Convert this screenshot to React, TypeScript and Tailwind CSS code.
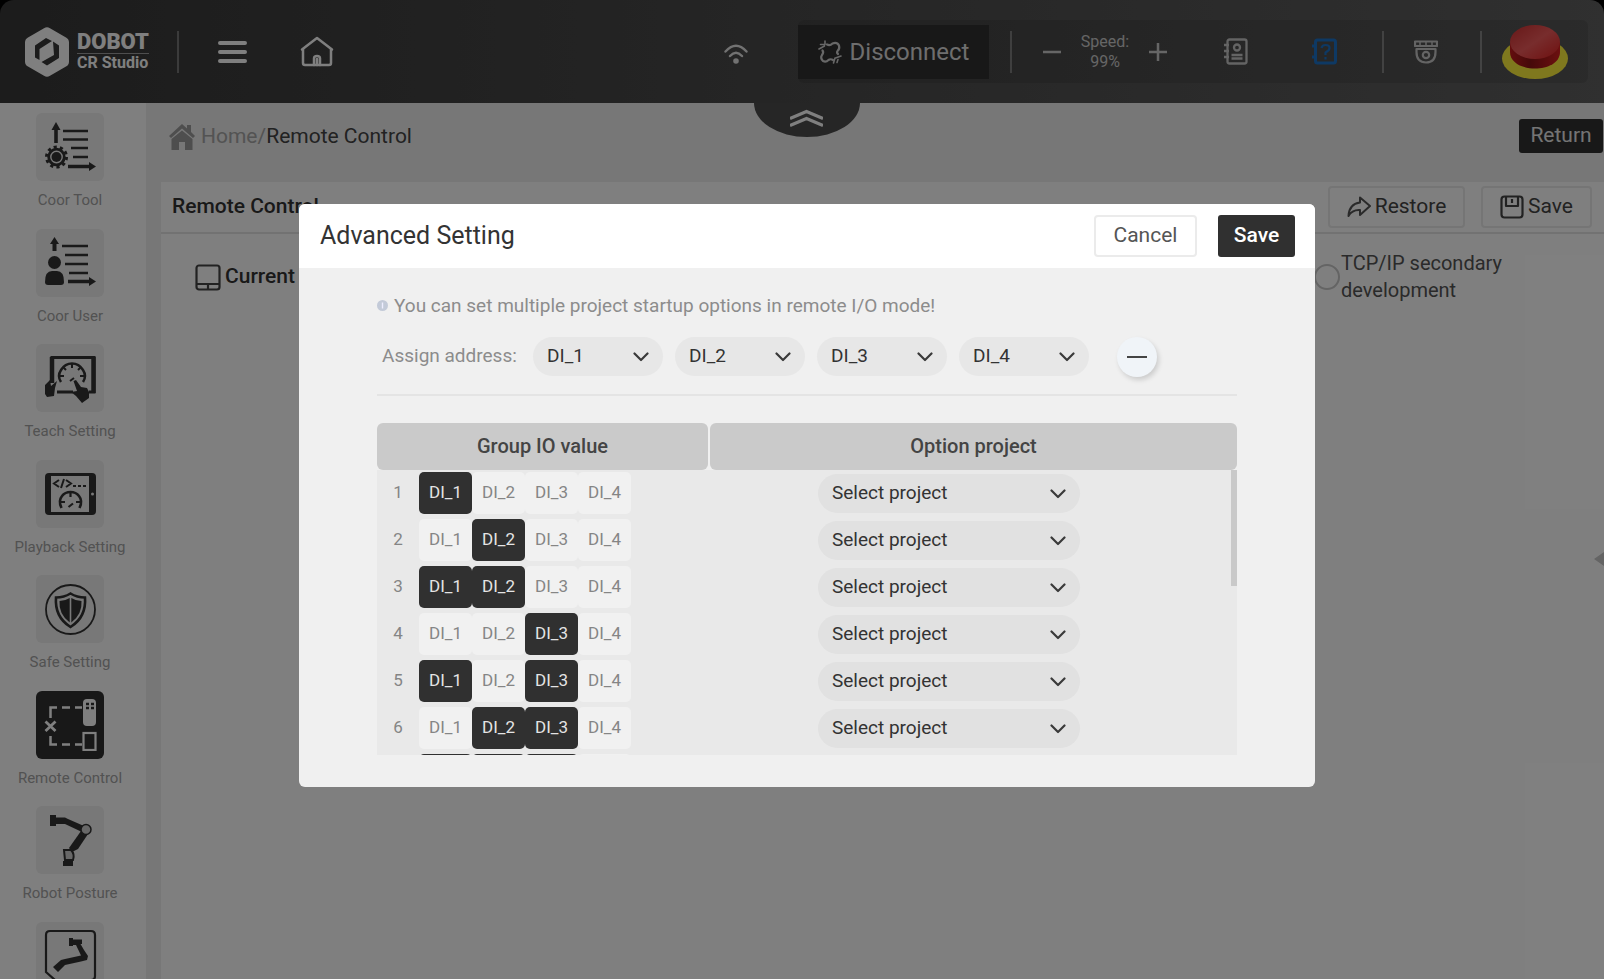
import { useState, type ReactNode } from "react";

const ADDRESSES = ["DI_1", "DI_2", "DI_3", "DI_4"];
const ROWS = Array.from({ length: 15 }, (_, i) => i + 1);

function Chevron({ className }: { className: string }) {
  return (
    <svg viewBox="0 0 16 10" className={className} fill="none" stroke="#3a3a3a" strokeWidth="2.2" strokeLinecap="round" strokeLinejoin="round" aria-hidden="true">
      <path d="M1.5 1.5 L8 8 L14.5 1.5" />
    </svg>
  );
}

function Logo() {
  return (
    <div className="flex items-center gap-2 text-white">
      <svg viewBox="0 0 44 50" className="h-[50px] w-11" aria-hidden="true">
        <path fill="#fff" d="M19 1.2 Q22 -.6 25 1.2 L41 10.4 Q44 12 44 15.500 V34.500 Q44 38 41 39.600 L25 48.800 Q22 50.600 19 48.800 L3 39.600 Q0 38 0 34.500 V15.500 Q0 12 3 10.400 Z" />
        <path fill="#383838" d="M21 11 L27 14 L14.500 22 V33 L10 30.500 V18.500 Z" />
        <path fill="#383838" d="M28 14.500 L34 18.500 V31 L22 38.500 L16.500 35 L29 28 Z" />
      </svg>
      <div className="flex flex-col">
        <span className="border-b border-white/50 text-[22px] leading-[22px] font-black">DOBOT</span>
        <span className="text-[16px] leading-[18px] font-bold">CR Studio</span>
      </div>
    </div>
  );
}

function IconButton({ label, children, className }: { label: string; children: ReactNode; className: string }) {
  return (
    <button type="button" aria-label={label} className={`flex shrink-0 items-center justify-center ${className}`}>
      {children}
    </button>
  );
}

function Rule() {
  return <span className="h-[42px] w-0.5 shrink-0 bg-white/30" />;
}

function EStop() {
  return (
    <svg viewBox="0 0 66 54" className="h-[54px] w-[66px]" aria-hidden="true">
      <defs>
        <linearGradient id="estop-top" x1="0" y1="0" x2="1" y2="1">
          <stop offset="0" stopColor="#d03030" />
          <stop offset="0.5" stopColor="#f05a5a" />
          <stop offset="1" stopColor="#e02020" />
        </linearGradient>
        <linearGradient id="estop-side" x1="0" y1="0" x2="1" y2="0">
          <stop offset="0" stopColor="#c81c1c" />
          <stop offset="0.4" stopColor="#8c1414" />
          <stop offset="1" stopColor="#d82020" />
        </linearGradient>
      </defs>
      <ellipse cx="33" cy="33.500" rx="33" ry="20.500" fill="#fff03c" />
      <path d="M8 18 V27 C8 49 58 49 58 27 V18 Z" fill="url(#estop-side)" />
      <ellipse cx="33" cy="17" rx="25" ry="17" fill="url(#estop-top)" />
    </svg>
  );
}

function Header() {
  return (
    <header className="relative flex h-[103px] shrink-0 items-center rounded-t-[14px] bg-linear-to-r from-[#383838] to-[#606060] pr-4 pl-[25px] text-white">
      <Logo />
      <div className="ml-7 flex items-center">
        <Rule />
        <IconButton label="Menu" className="ml-[30px] h-12 w-12">
          <svg viewBox="0 0 29 24" className="h-6 w-[29px]" stroke="#fff" strokeWidth="4" strokeLinecap="round" aria-hidden="true">
            <path d="M2 3 H27 M2 12 H27 M2 21 H27" />
          </svg>
        </IconButton>
        <IconButton label="Home" className="ml-9 h-12 w-12">
          <svg viewBox="0 0 34 31" className="h-[31px] w-[34px]" fill="none" stroke="#fff" strokeWidth="2.500" strokeLinejoin="round" strokeLinecap="round" aria-hidden="true">
            <path d="M2 13.500 L17 2 L32 13.500" />
            <path d="M3 13.500 V27 Q3 29 5 29 H29 Q31 29 31 27 V13.500" />
            <path d="M14 29 V22.500 Q14 20 17 20 Q20 20 20 22.500 V29 M17 23 V29" />
          </svg>
        </IconButton>
      </div>
      <IconButton label="Network" className="ml-auto h-12 w-12">
        <svg viewBox="0 0 24 20" className="mt-1 h-5 w-6" fill="none" stroke="#e4e4e4" strokeWidth="2.400" strokeLinecap="round" aria-hidden="true">
          <path d="M1.500 7.500 Q12 -4 22.500 7.500 M6 12 Q12 5.500 18 12" />
          <circle cx="12" cy="17" r="1.600" fill="#e4e4e4" />
        </svg>
      </IconButton>
      <div className="ml-[38px] flex h-[63px] items-center rounded-md bg-black/10 pr-5">
        <button type="button" className="flex h-[54px] w-[191px] items-center justify-center gap-2 bg-[#303030] text-[24px] text-[#dcdcdc]">
          <svg viewBox="0 0 24 24" className="h-6 w-6" fill="none" stroke="#d0d0d0" strokeWidth="2.200" strokeLinecap="round" strokeLinejoin="round" aria-hidden="true">
            <path d="M9 4.500 Q12 6 14.500 3.500 Q19 1.500 21 5.500 Q22 9 19.500 11 Q18.500 13 20 14" />
            <path d="M4.500 10.500 Q6 12.500 4 15 Q2 18 5 21 Q8 22.500 10.500 20 Q12.500 18.500 15 20" />
            <path d="M2.500 4.500 H7 M7 1 V4.500 M1 9 L6.500 6 M17.500 18 L23 16 M17 18 L15.500 23 M20 19.500 L19 22.500" strokeWidth="1.600" />
          </svg>
          Disconnect
        </button>
        <span className="w-[21px]" />
        <Rule />
        <IconButton label="Decrease speed" className="ml-5 h-10 w-10">
          <svg viewBox="0 0 18 18" className="h-[18px] w-[18px]" stroke="#ccc" strokeWidth="2.500" aria-hidden="true"><path d="M0 9 H18" /></svg>
        </IconButton>
        <div className="w-[66px] text-center text-[16px] leading-5 text-[#ccc]">
          Speed:
          <br />
          99%
        </div>
        <IconButton label="Increase speed" className="h-10 w-10">
          <svg viewBox="0 0 18 18" className="h-[18px] w-[18px]" stroke="#ccc" strokeWidth="2.500" aria-hidden="true"><path d="M0 9 H18 M9 0 V18" /></svg>
        </IconButton>
        <IconButton label="Logs" className="ml-[38px] h-10 w-10">
          <svg viewBox="0 0 24 27" className="h-[27px] w-6" fill="none" stroke="#c8c8c8" strokeWidth="2.300" strokeLinejoin="round" aria-hidden="true">
            <rect x="3.500" y="1.500" width="19" height="24" rx="2" />
            <path d="M0 7 H5 M0 13 H5 M0 19 H5" />
            <circle cx="13" cy="9.500" r="3" />
            <path d="M7.500 17 H18.500 M7.500 20.500 H18.500" />
          </svg>
        </IconButton>
        <IconButton label="Help" className="ml-[49px] h-10 w-10">
          <svg viewBox="0 0 26 27" className="h-[27px] w-[26px]" fill="none" stroke="#1c72c8" strokeWidth="3" strokeLinejoin="round" aria-hidden="true">
            <rect x="3.500" y="2" width="20" height="23" rx="2" />
            <path d="M0 8 H4 M0 19 H4" />
            <path d="M9.500 10 Q10 7 13.500 7 Q17.500 7 17.500 10 Q17.500 12.500 13.500 14.500 V17 M13.500 19 V21.500" strokeWidth="2.200" />
          </svg>
        </IconButton>
        <span className="w-[37px]" />
        <Rule />
        <IconButton label="Camera" className="ml-[22px] h-10 w-10">
          <svg viewBox="0 0 24 24" className="h-6 w-6" fill="none" stroke="#c8c8c8" strokeWidth="2.200" strokeLinejoin="round" aria-hidden="true">
            <path d="M1 1.500 H23 V6 H1 Z" />
            <path d="M6 1.500 V6 M12 1.500 V6 M18 1.500 V6" strokeWidth="1.500" />
            <path d="M2.500 9 H21.500 V12 Q21.500 22.500 12 22.500 Q2.500 22.500 2.500 12 Z" />
            <circle cx="12" cy="15" r="3.200" />
          </svg>
        </IconButton>
        <span className="w-[34px]" />
        <Rule />
        <IconButton label="Emergency stop" className="ml-5 h-[54px] w-[66px]">
          <EStop />
        </IconButton>
      </div>
      <button
        type="button"
        aria-label="Collapse toolbar"
        className="absolute top-full left-[47%] flex h-[34px] w-[106px] justify-center rounded-[0_0_50%_50%/0_0_100%_100%] bg-[#4c4c4c] pt-[6px]"
      >
        <svg viewBox="0 0 33 19" className="h-[19px] w-[33px]" fill="none" stroke="#fff" strokeWidth="3.200" aria-hidden="true">
          <path d="M0 9.500 L16.500 2.500 L33 9.500 M0 16.500 L16.500 9.500 L33 16.500" />
        </svg>
      </button>
    </header>
  );
}

const INK = "#333333";

function ArrowUp() {
  return <path d="M11 0 L15.500 8 H12.800 V21 H9.200 V8 H6.500 Z" fill={INK} />;
}

function ArrowRight() {
  return <path d="M23 42.800 H44 V40 L51 44.500 L44 49 V46.200 H23 Z" fill={INK} />;
}

const ICONS: Record<string, ReactNode> = {
  "Coor Tool": (
    <>
      <ArrowUp />
      <path d="M18 9 H43 M18 17.500 H43 M26 26 H43 M28 35 H43" stroke={INK} strokeWidth="2.300" />
      <circle cx="11.500" cy="35" r="10" fill="none" stroke={INK} strokeWidth="3" strokeDasharray="3.140 3.140" />
      <circle cx="11.500" cy="35" r="7.800" fill="none" stroke={INK} strokeWidth="2.800" />
      <circle cx="11.500" cy="35" r="5" fill={INK} />
      <ArrowRight />
    </>
  ),
  "Coor User": (
    <>
      <path d="M9.500 0 L14 7 H11.500 V14 H7.500 V7 H5 Z" fill={INK} />
      <path d="M17 9 H43 M20 18 H43 M20 27 H43 M24 36 H43" stroke={INK} strokeWidth="2.300" />
      <circle cx="9.500" cy="25.500" r="6.500" fill={INK} />
      <path d="M0 45 Q0 34 7 34 H12 Q19 34 19 45 Q19 48 16 48 H3 Q0 48 0 45 Z" fill={INK} />
      <ArrowRight />
    </>
  ),
  "Teach Setting": (
    <>
      <path d="M7 30 V4.500 H49 V39 H44 M12 39 H28" fill="none" stroke={INK} strokeWidth="3" />
      <path d="M48.500 4 V40 M7 4 V30" stroke={INK} strokeWidth="4.500" />
      <path d="M16 29 Q12 23 16 17 Q20 10.500 27 10.500 Q34 10.500 38 17 Q42 23 38 29" fill="none" stroke={INK} strokeWidth="2.500" />
      <path d="M27 11 V15 M15 23 H19 M39 23 H35 M18 14 L21 17 M36 14 L33 17 M25 28 L29 25" stroke={INK} strokeWidth="2" />
      <path d="M0 32 L5 27 L6 33 L12 28 L10 35 L9 43 L2 44 L0 41 Z" fill={INK} />
      <path d="M28.500 28 L31 27 L36 34 L42 35 L44 39 L44 45 L37 50 L31 43 L26 39 L32 38 Z" fill={INK} />
    </>
  ),
  "Playback Setting": (
    <>
      <rect x="0" y="5" width="51" height="42" rx="4" fill={INK} />
      <rect x="6" y="8" width="38" height="36" fill="#f0f0f0" />
      <path d="M14 12 L9 15.500 L14 19 M19 11 L16 20 M21 12 L26 15.500 L21 19 M28 18 H31 M33 18 H36 M38 18 H41" fill="none" stroke={INK} strokeWidth="2" />
      <path d="M16.500 40 Q13 33 17 28 Q20 24 25.500 24 Q31 24 34 28 Q38 33 34.500 40" fill="none" stroke={INK} strokeWidth="2.600" />
      <path d="M25.500 24 V29 M20 34 H16 M35 34 H31 M23.500 39 L28 35.500" fill="none" stroke={INK} strokeWidth="2.200" />
      <circle cx="47.500" cy="26" r="1.500" fill="#f0f0f0" />
    </>
  ),
  "Safe Setting": (
    <>
      <circle cx="25.500" cy="25.500" r="24.500" fill="none" stroke={INK} strokeWidth="1.800" />
      <path d="M25.500 9.500 Q32 13.500 40 13.500 Q41.500 33 25.500 43 Q9.500 33 11 13.500 Q19 13.500 25.500 9.500 Z" fill="none" stroke={INK} strokeWidth="2.600" />
      <path d="M24.700 14 V38.500 Q13.500 30 14.500 17 Q20 17 24.700 14 Z M26.300 14 V38.500 Q37.500 30 36.500 17 Q31 17 26.300 14 Z" fill={INK} />
    </>
  ),
  "Remote Control": (
    <>
      <path d="M5.500 19 V8.500 H12 M17 8.500 H25 M30 8.500 H37 M5.500 37 V45.500 H12 M17 45.500 H25 M30 45.500 H37" fill="none" stroke="#fff" strokeWidth="2.500" />
      <path d="M0.500 22.500 L10.500 32 M10.500 22.500 L0.500 32" stroke="#fff" strokeWidth="2.800" />
      <rect x="38" y="0" width="13" height="27" rx="4" fill="#fff" />
      <path d="M41 5 H44 M46 5 H49 M41 9 H44 M46 9 H49" stroke="#303030" strokeWidth="2.500" />
      <rect x="38.500" y="34" width="12" height="17" fill="none" stroke="#fff" strokeWidth="2.200" />
    </>
  ),
  "Robot Posture": (
    <>
      <path d="M5 0 H11 V2.500 H20 L23 4 L39 11 L37 17 L20 9 H11 V11 H5 Z" fill={INK} />
      <path d="M43 19 L33 34 L27 37 L24 33 L36 16 Z" fill={INK} />
      <circle cx="41" cy="14.500" r="5" fill="#d0d0d0" stroke={INK} strokeWidth="1.500" />
      <path d="M19 35 H26 Q30 39 28 45 H20 Z" fill="#d0d0d0" stroke={INK} strokeWidth="2" />
      <path d="M18 46 H28 V51 H18 Z" fill={INK} />
    </>
  ),
  "Robot Pack": (
    <>
      <path d="M5 1 H46 Q50 1 50 5 V46 Q50 50 46 50 H10 L1 42 V5 Q1 1 5 1 Z" fill="none" stroke={INK} strokeWidth="2.200" />
      <path d="M24 8 H28 V9.500 H37 V14 H35.500 L39 20 L43 26 L42 30 L36 31.500 L20 35 L13 42 L8 37 L16 30 L20 29 L36 25.500 L31 15 H28 V16 H24 Z" fill={INK} />
    </>
  ),
};

function SidebarItem({ label, active }: { label: string; active: boolean }) {
  const tile = active ? "bg-[#303030]" : "bg-[#f0f0f0]";
  return (
    <li>
      <button type="button" aria-label={label} className="flex w-full flex-col items-center gap-2">
        <span className={`flex h-[68px] w-[68px] items-center justify-center rounded-md ${tile}`}>
          <svg viewBox="-1 -1 53 53" className="h-[53px] w-[53px]" aria-hidden="true">
            {ICONS[label]}
          </svg>
        </span>
        <span className="text-[15px] leading-normal whitespace-nowrap text-[#a4a4a4]">{label === "Robot Pack" ? "" : label}</span>
      </button>
    </li>
  );
}

function Sidebar() {
  return (
    <nav className="w-[146px] shrink-0 overflow-hidden bg-white pr-[6px]">
      <ul className="flex flex-col gap-[17px] pt-[10px]">
        {Object.keys(ICONS).map((label) => (
          <SidebarItem key={label} label={label} active={label === "Remote Control"} />
        ))}
      </ul>
    </nav>
  );
}

function Workspace() {
  return (
    <main className="flex min-w-0 flex-1 flex-col bg-[#eeeeee] pl-[15px]">
      <div className="flex h-[79px] items-start justify-between pt-4 pl-2">
        <div className="flex h-9 items-center text-[21px]">
          <svg viewBox="0 0 26 26" className="mr-[6px] h-[26px] w-[26px]" fill="#9c9c9c" aria-hidden="true">
            <path d="M0 12 L13 0 L18 4.500 V1 H22 V8 L26 12 L24 14 L13 4.500 L2 14 Z" />
            <path d="M2.500 15 L13 6.500 L23.500 15 V26 H16 V18 H10 V26 H2.500 Z" />
          </svg>
          <a href="#home" className="text-[#a6a6a6]">Home/</a>
          <span className="text-[#444]">Remote Control</span>
        </div>
        <button type="button" className="mr-px h-[34px] w-[84px] rounded-[3px] bg-[#303030] text-[21px] text-[#e8e8e8]">Return</button>
      </div>
      <section className="relative flex-1 bg-white">
        <div className="flex h-[52px] items-center justify-between border-b-2 border-[#e4e4e4] pr-3 pl-[11px]">
          <h1 className="text-[21px] font-medium text-[#333]">Remote Control</h1>
          <div className="flex gap-4">
            <button type="button" className="flex h-[42px] w-[137px] items-center justify-center gap-1 rounded border-2 border-[#ebebeb] text-[21px] text-[#444]">
              <svg viewBox="0 0 24 22" className="h-[22px] w-6" fill="none" stroke="#555" strokeWidth="2" strokeLinejoin="round" aria-hidden="true">
                <path d="M13 1.500 L23 10 L13 19 V14 Q5 13.500 1.500 20 Q2 8 13 6.500 Z" />
              </svg>
              Restore
            </button>
            <button type="button" className="flex h-[42px] w-[111px] items-center justify-center gap-1 rounded border-2 border-[#ebebeb] text-[21px] text-[#444]">
              <svg viewBox="0 0 24 24" className="h-6 w-6" fill="none" stroke="#444" strokeWidth="2.200" strokeLinejoin="round" aria-hidden="true">
                <rect x="1.500" y="1.500" width="21" height="21" rx="3" />
                <path d="M6 2 V11 H18 V2 M12 4 V8" />
              </svg>
              Save
            </button>
          </div>
        </div>
        <div className="flex justify-between pt-4 pl-[34px]">
          <div className="flex h-[54px] items-center gap-1 text-[21px] font-medium text-[#333]">
            <svg viewBox="0 0 26 27" className="h-[27px] w-[26px]" fill="none" stroke="#444" strokeWidth="2.200" aria-hidden="true">
              <rect x="1.500" y="1.500" width="23" height="24" rx="2.500" />
              <path d="M2 20 H24 M13 20 V25" />
            </svg>
            Current mode
          </div>
          <label className="flex w-[290px] items-center gap-px text-[20px] leading-[27px] text-[#555]">
            <input type="radio" name="mode" className="h-[26px] w-[26px] shrink-0 appearance-none rounded-full border-2 border-[#c8c8c8]" />
            <span className="w-[200px]">TCP/IP secondary development</span>
          </label>
        </div>
        <svg viewBox="0 0 10 14" className="absolute top-[370px] right-0 h-[14px] w-[10px]" fill="#c8c8c8" aria-hidden="true">
          <path d="M0 7 L10 0 V14 Z" />
        </svg>
      </section>
    </main>
  );
}

function AddressSelect({ value, index, onChange }: { value: string; index: number; onChange: (v: string) => void }) {
  return (
    <div className="relative">
      <select
        aria-label={`Address ${index + 1}`}
        value={value}
        onChange={(e) => onChange(e.target.value)}
        className="block h-[39px] w-[130px] appearance-none rounded-full bg-[#e7e7e7] pl-[14px] text-[19px] text-[#333]"
      >
        {ADDRESSES.map((a) => (
          <option key={a}>{a}</option>
        ))}
      </select>
      <Chevron className="pointer-events-none absolute top-[15px] right-[14px] h-[10px] w-4" />
    </div>
  );
}

function ProjectRow({ n }: { n: number }) {
  return (
    <tr className="h-[47px] bg-[#e9e9e9]">
      <td className="p-0">
        <div className="flex items-center">
          <span className="w-[42px] text-center text-[17px] text-[#858585]">{n}</span>
          {ADDRESSES.map((a, bit) => {
            const on = Math.floor(n / 2 ** bit) % 2 === 1;
            return (
              <button
                key={a}
                type="button"
                aria-pressed={on}
                className={`h-[42px] w-[53px] rounded-[5px] text-[17px] ${on ? "bg-[#303030] text-[#e4e4e4]" : "bg-[#f1f1f1] text-[#858585]"}`}
              >
                {a}
              </button>
            );
          })}
        </div>
      </td>
      <td className="p-0">
        <div className="relative ml-[108px] w-[262px]">
          <select aria-label={`Project for group ${n}`} className="block h-[39px] w-full appearance-none rounded-full bg-[#e1e1e1] pl-[14px] text-[19px] text-[#333]">
            <option>Select project</option>
          </select>
          <Chevron className="pointer-events-none absolute top-[15px] right-[14px] h-[10px] w-4" />
        </div>
      </td>
    </tr>
  );
}

function AdvancedDialog() {
  const [addresses, setAddresses] = useState(ADDRESSES);
  return (
    <div role="dialog" aria-modal="true" aria-labelledby="dialog-title" className="w-[1016px] max-w-full overflow-hidden rounded-md bg-[#f0f0f0]">
      <div className="flex h-16 items-center bg-white pr-5 pl-[21px]">
        <h2 id="dialog-title" className="flex-1 text-[25px] text-[#333]">Advanced Setting</h2>
        <button type="button" className="h-[42px] w-[103px] rounded border-2 border-[#ebebeb] text-[21px] text-[#555]">Cancel</button>
        <button type="button" className="ml-[21px] h-[42px] w-[77px] rounded-[3px] bg-[#303030] text-[21px] font-medium text-white">Save</button>
      </div>
      <div className="px-[78px] pt-6 pb-8">
        <p className="flex items-center gap-[6px] text-[19px] leading-7 text-[#8c8c8c]">
          <svg viewBox="0 0 11 11" className="h-[11px] w-[11px]" aria-hidden="true">
            <circle cx="5.500" cy="5.500" r="5.500" fill="#c3cad8" />
            <path d="M5.500 2.500 V8.500" stroke="#eef" strokeWidth="1.400" />
          </svg>
          You can set multiple project startup options in remote I/O mode!
        </p>
        <div className="mt-[17px] flex items-center gap-3 pl-[5px]">
          <span className="w-[139px] text-[19px] text-[#8c8c8c]">Assign address:</span>
          {addresses.map((a, i) => (
            <AddressSelect key={i} value={a} index={i} onChange={(v) => setAddresses(addresses.map((x, j) => (j === i ? v : x)))} />
          ))}
          <button type="button" aria-label="Remove address" className="ml-4 flex h-10 w-10 items-center justify-center rounded-full bg-[#f0f4f8] shadow-[2px_3px_5px_rgba(0,0,0,0.15)]">
            <span className="h-0.5 w-5 bg-[#444]" />
          </button>
        </div>
        <hr className="mt-[17px] border-t-2 border-[#e4e4e4]" />
        <div className="relative mt-[27px]">
          <div className="h-[332px] overflow-y-auto [scrollbar-width:none]">
            <table className="w-full table-fixed border-separate border-spacing-0">
              <thead className="sticky top-0 z-10 bg-[#f0f0f0] text-[20px] text-[#444]">
                <tr>
                  <th className="w-[333px] p-0 pr-0.5 font-medium">
                    <div className="h-[47px] rounded-md bg-[#cacaca] leading-[47px]">Group IO value</div>
                  </th>
                  <th className="p-0 font-medium">
                    <div className="h-[47px] rounded-md bg-[#cacaca] leading-[47px]">Option project</div>
                  </th>
                </tr>
              </thead>
              <tbody>
                {ROWS.map((n) => (
                  <ProjectRow key={n} n={n} />
                ))}
              </tbody>
            </table>
          </div>
          <span className="absolute top-[47px] right-0 h-[116px] w-[6px] bg-[#c9c9c9]" />
        </div>
      </div>
    </div>
  );
}

export default function App() {
  return (
    <div className="relative flex h-screen flex-col overflow-hidden bg-black font-['Roboto','Liberation_Sans',sans-serif]">
      <Header />
      <div className="flex min-h-0 flex-1">
        <Sidebar />
        <Workspace />
      </div>
      <div className="absolute inset-0 z-20 flex items-center justify-center bg-black/50 pt-[11px] pl-[10px]">
        <AdvancedDialog />
      </div>
    </div>
  );
}
